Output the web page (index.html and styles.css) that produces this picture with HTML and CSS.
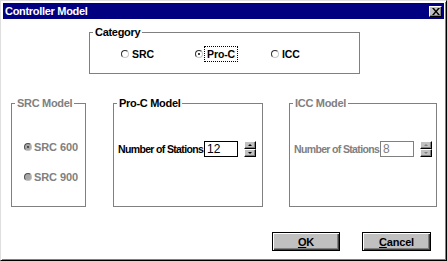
FILE: index.html
```html
<!DOCTYPE html>
<html>
<head>
<meta charset="utf-8">
<link rel="stylesheet" href="styles.css">
</head>
<body>
<div class="window">
  <div class="titlebar">
    <span class="title">Controller Model</span>
    <span class="close"><svg width="8" height="7" viewBox="0 0 8 7"><path d="M0 0h2l2 2.5L6 0h2L5 3.5 8 7H6L4 4.5 2 7H0l3-3.5z" fill="#000"/></svg></span>
  </div>
  <div class="content">
    <fieldset class="group category">
      <legend>Category</legend>
      <div class="radios">
        <label class="radio slot1"><span class="dot"></span><span>SRC</span></label>
        <label class="radio slot2"><span class="dot checked"></span><span class="focus">Pro-C</span></label>
        <label class="radio slot3"><span class="dot"></span><span>ICC</span></label>
      </div>
    </fieldset>
    <div class="models">
      <fieldset class="group src disabled">
        <legend>SRC Model</legend>
        <div class="src-list">
          <label class="radio"><span class="dot dis checked"></span><span>SRC 600</span></label>
          <label class="radio"><span class="dot dis"></span><span>SRC 900</span></label>
        </div>
      </fieldset>
      <fieldset class="group proc">
        <legend>Pro-C Model</legend>
        <div class="stations">
          <span class="lbl">Number of Stations</span>
          <span class="input">12</span>
          <span class="spin"><span class="half"><i class="up"></i></span><span class="half"><i class="down"></i></span></span>
        </div>
      </fieldset>
      <fieldset class="group icc disabled">
        <legend>ICC Model</legend>
        <div class="stations">
          <span class="lbl">Number of Stations</span>
          <span class="input">8</span>
          <span class="spin"><span class="half"><i class="up"></i></span><span class="half"><i class="down"></i></span></span>
        </div>
      </fieldset>
    </div>
    <div class="buttons">
      <button class="btn ok"><u>O</u>K</button>
      <button class="btn cancel"><u>C</u>ancel</button>
    </div>
  </div>
</div>
</body>
</html>
```
FILE: styles.css
```css
* { box-sizing: border-box; }
html, body { margin: 0; padding: 0; background: #fff; }
body { font-family: "Liberation Sans", Arial, sans-serif; font-size: 10px; font-weight: bold; color: #000; white-space: nowrap; }

.window {
  width: 447px; height: 261px;
  border: 1px solid; border-color: #dfdfdf #000 #000 #dfdfdf;
  box-shadow: inset 1px 1px #fff, inset -1px -1px #808080;
  padding: 2px;
  background: #fff;
  display: flex; flex-direction: column;
}
.titlebar {
  height: 16px; background: #000080; color: #fff;
  display: flex; align-items: center; justify-content: space-between;
  padding: 0 2px 0 2px;
}
.title { font-size: 11px; letter-spacing: -0.3px; }
.close {
  width: 13px; height: 11px; background: #c0c0c0;
  border: 1px solid; border-color: #fff #000 #000 #fff;
  box-shadow: inset -1px -1px #808080;
  display: flex; align-items: center; justify-content: center;
}

.content { flex: 1; }

.group {
  border: 1px solid #808080;
  margin: 0; padding: 0;
  min-width: 0;
}
.group legend {
  padding: 0 2px; margin-left: 3px;
  line-height: 12px; font-size: 11px; letter-spacing: -0.3px;
}
.disabled legend, .disabled .lbl, .disabled .radio { color: #808080; }

.category {
  margin: 7px 0 0 86px;
  width: 271px; height: 48px;
}
.radios { display: flex; align-items: center; height: 28px; padding: 3px 0 0 31px; }
.radio { display: flex; align-items: center; gap: 3px; font-size: 10.5px; letter-spacing: -0.1px; }
.slot1 { width: 74px; }
.slot2 { width: 76px; }
.dot {
  width: 8px; height: 8px; border-radius: 50%;
  border: 1px solid; border-color: #303030 #c8c8c8 #c8c8c8 #303030;
  background: #fff; position: relative; flex: none;
}
.dot.checked::after {
  content: ""; position: absolute; left: 2px; top: 2px;
  width: 2px; height: 2px; background: #000; border-radius: 50%;
}
.dot.dis { background: #a8a8a8; border-color: #505050 #c0c0c0 #c0c0c0 #505050; }
.dot.dis.checked::after { background: #303030; }
.focus { outline: 1px dotted #000; outline-offset: 1px; padding: 0 1px; }

.models { display: flex; margin: 23px 0 0 8px; }
.src { width: 75px; height: 110px; }
.proc { width: 150px; height: 110px; margin-left: 27px; }
.icc { width: 148px; height: 110px; margin-left: 26px; }

.src-list { display: flex; flex-direction: column; gap: 18px; padding: 32px 0 0 12px; }
.src-list .radio { font-size: 11px; gap: 2px; }

.stations { display: flex; align-items: center; padding: 32px 0 0 4px; }
.lbl { width: 86px; flex: none; font-size: 10.5px; letter-spacing: -0.65px; }
.input {
  width: 34px; height: 16px; flex: none;
  border: 1px solid #000; font-weight: normal; font-size: 12px;
  padding-left: 2px; line-height: 14px;
}
.disabled .input { color: #808080; border-color: #808080; }
.spin { display: flex; flex-direction: column; margin-left: 6px; width: 12px; flex: none; }
.half {
  height: 8px; background: #c0c0c0;
  border: 1px solid; border-color: #fff #000 #000 #fff;
  box-shadow: inset -1px -1px #808080;
  display: flex; align-items: center; justify-content: center;
}
.half i { width: 0; height: 0; border-left: 2px solid transparent; border-right: 2px solid transparent; }
.half i.up { border-bottom: 2px solid #000; }
.half i.down { border-top: 2px solid #000; }
.disabled .half i.up { border-bottom-color: #808080; }
.disabled .half i.down { border-top-color: #808080; }

.buttons { display: flex; gap: 22px; margin: 25px 0 0 269px; }
.btn {
  font-family: inherit; font-size: 11px; font-weight: bold;
  height: 19px; background: #c0c0c0; color: #000;
  border: 1px solid #000;
  box-shadow: inset 1px 1px #fff, inset -1px -1px #404040, inset -2px -2px #808080;
  padding: 0; letter-spacing: -0.2px;
}
.ok { width: 68px; }
.cancel { width: 69px; }
```
